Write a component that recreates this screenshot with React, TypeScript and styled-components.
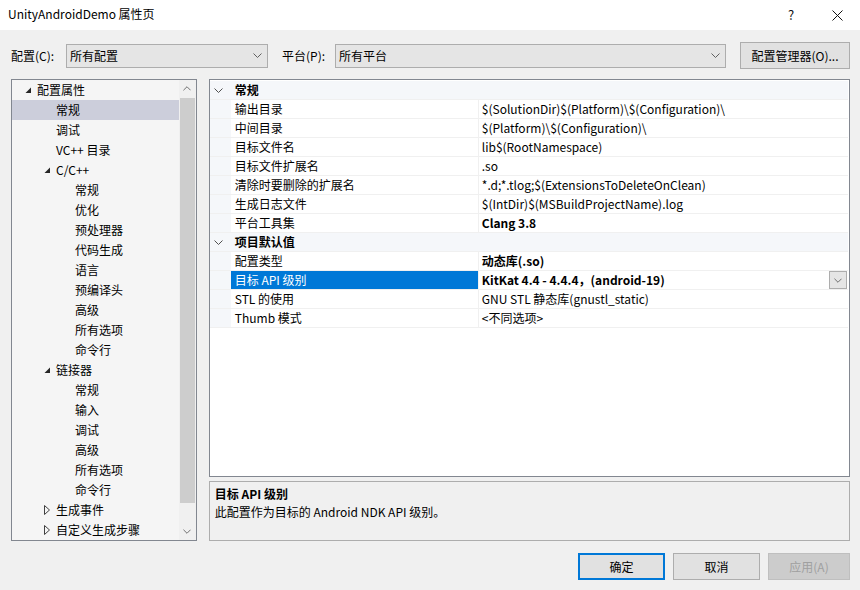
import React from "react";
import styled, { createGlobalStyle } from "styled-components";

const Global = createGlobalStyle`
  html, body { margin: 0; padding: 0; background: #f0f0f0; }
  body { font-family: "Noto Sans CJK SC", "Noto Sans", sans-serif; font-size: 12px; color: #000; }
  * { box-sizing: border-box; }
`;

const Window = styled.div`
  width: 860px;
  height: 590px;
  display: flex;
  flex-direction: column;
  background: #f0f0f0;
  overflow: hidden;
`;

const TitleBar = styled.div`
  height: 30px;
  background: #fff;
  display: flex;
  align-items: center;
  padding-left: 8px;
  font-size: 12px;
  line-height: 16px;
`;

const TitleText = styled.div`
  flex: 1;
  padding-bottom: 2px;
`;

const TitleButton = styled.div<{ $w: number }>`
  width: ${(p) => p.$w}px;
  height: 30px;
  display: flex;
  align-items: center;
  justify-content: center;
  font-size: 13px;
  color: #111;
`;

const Body = styled.div`
  flex: 1;
  display: flex;
  flex-direction: column;
  padding: 12px 10px 0 11px;
`;

const Toolbar = styled.div`
  height: 27px;
  display: flex;
  align-items: center;
`;

const Label = styled.div<{ $w: number; $gap?: number }>`
  width: ${(p) => p.$w}px;
  margin-left: ${(p) => p.$gap ?? 0}px;
  line-height: 16px;
`;

const Combo = styled.div<{ $w: number }>`
  width: ${(p) => p.$w}px;
  height: 24px;
  background: #e5e5e5;
  border: 1px solid #adadad;
  display: flex;
  align-items: center;
  padding-left: 3px;
  line-height: 16px;
`;

const ComboText = styled.div`
  flex: 1;
`;

const ComboArrow = styled.div`
  width: 20px;
  display: flex;
  justify-content: center;
  align-items: center;
`;

const ToolButton = styled.div`
  margin-left: 14px;
  width: 110px;
  height: 27px;
  background: #e1e1e1;
  border: 1px solid #adadad;
  display: flex;
  align-items: center;
  justify-content: center;
  line-height: 16px;
`;

const Main = styled.div`
  margin-top: 10px;
  height: 462px;
  display: flex;
  gap: 12px;
`;

const Tree = styled.div`
  width: 186px;
  height: 462px;
  border: 1px solid #828790;
  background: #f5f5f5;
  display: flex;
  overflow: hidden;
`;

const TreeList = styled.div`
  flex: 1;
  overflow: hidden;
`;

const TreeRow = styled.div<{ $level: number; $selected?: boolean }>`
  height: 20px;
  display: flex;
  align-items: center;
  padding-left: ${(p) => 13 + p.$level * 19}px;
  background: ${(p) => (p.$selected ? "#cccedb" : "transparent")};
  line-height: 16px;
  white-space: nowrap;
`;

const ArrowSlot = styled.div`
  width: 12px;
  height: 20px;
  display: flex;
  align-items: center;
`;

const ScrollBar = styled.div`
  width: 17px;
  background: #f0f0f0;
  display: flex;
  flex-direction: column;
`;

const ScrollBtn = styled.div`
  height: 17px;
  display: flex;
  align-items: center;
  justify-content: center;
`;

const ScrollTrack = styled.div`
  flex: 1;
  display: flex;
  flex-direction: column;
  padding: 1px 1px 0 1px;
`;

const Thumb = styled.div`
  height: 405px;
  background: #cdcdcd;
`;

const RightCol = styled.div`
  width: 642px;
  display: flex;
  flex-direction: column;
  gap: 4px;
`;

const Grid = styled.div`
  height: 398px;
  border: 1px solid #828790;
  background: #fff;
  padding: 1px 1px 0 0;
  overflow: hidden;
`;

const GridRow = styled.div<{ $category?: boolean }>`
  height: 19px;
  display: grid;
  grid-template-columns: 21px 247px 1fr;
  background: ${(p) => (p.$category ? "#f5f7fa" : "#fff")};
  border-bottom: 1px solid #f0f0f0;
  line-height: 16px;
`;

const Gutter = styled.div`
  background: #f5f7fa;
  display: flex;
  align-items: center;
  padding-left: 4px;
`;

const CatTitle = styled.div`
  grid-column: 2 / 4;
  font-weight: bold;
  padding-left: 4px;
  display: flex;
  align-items: center;
`;

const NameCell = styled.div<{ $selected?: boolean }>`
  padding-left: 4px;
  display: flex;
  align-items: center;
  white-space: nowrap;
  background: ${(p) => (p.$selected ? "#0078d7" : "transparent")};
  color: ${(p) => (p.$selected ? "#fff" : "#000")};
`;

const ValueCell = styled.div<{ $bold?: boolean }>`
  border-left: 1px solid #f0f0f0;
  padding-left: 3px;
  display: flex;
  align-items: center;
  white-space: nowrap;
  font-weight: ${(p) => (p.$bold ? "bold" : "normal")};
`;

const ValueText = styled.div`
  flex: 1;
`;

const DropBtn = styled.div`
  width: 18px;
  height: 18px;
  background: #e5e5e5;
  border: 1px solid #adadad;
  display: flex;
  align-items: center;
  justify-content: center;
  margin-right: 1px;
`;

const Desc = styled.div`
  height: 60px;
  border: 1px solid #adadad;
  background: #f0f0f0;
  padding: 3px 5px;
  line-height: 18px;
`;

const DescTitle = styled.div`
  font-weight: bold;
`;

const Footer = styled.div`
  margin-top: 12px;
  display: flex;
  justify-content: flex-end;
  gap: 8px;
`;

const Button = styled.div<{ $primary?: boolean; $disabled?: boolean; $w: number }>`
  width: ${(p) => p.$w}px;
  height: 27px;
  display: flex;
  align-items: center;
  justify-content: center;
  background: ${(p) => (p.$disabled ? "#cccccc" : "#e1e1e1")};
  border: ${(p) => (p.$primary ? "2px solid #0078d7" : p.$disabled ? "1px solid #bfbfbf" : "1px solid #adadad")};
  color: ${(p) => (p.$disabled ? "#a0a0a0" : "#000")};
  line-height: 16px;
`;

const Chevron = ({ dir = "down", color = "#606060", w = 9 }: { dir?: "down" | "up"; color?: string; w?: number }) => (
  <svg width={w} height={5} viewBox="0 0 9 5">
    <polyline
      points={dir === "down" ? "0.5,0.5 4.5,4.5 8.5,0.5" : "0.5,4.5 4.5,0.5 8.5,4.5"}
      fill="none"
      stroke={color}
      strokeWidth="1"
    />
  </svg>
);

const Expanded = () => (
  <svg width="7" height="7" viewBox="0 0 7 7">
    <polygon points="6,0.5 6,6 0.5,6" fill="#262626" />
  </svg>
);

const Collapsed = () => (
  <svg width="6" height="10" viewBox="0 0 6 10">
    <polygon points="0.5,0.5 5.5,5 0.5,9.5" fill="none" stroke="#404040" strokeWidth="1" />
  </svg>
);

type TreeItem = { label: string; level: number; state?: "open" | "closed"; selected?: boolean };

const treeItems: TreeItem[] = [
  { label: "配置属性", level: 0, state: "open" },
  { label: "常规", level: 1, selected: true },
  { label: "调试", level: 1 },
  { label: "VC++ 目录", level: 1 },
  { label: "C/C++", level: 1, state: "open" },
  { label: "常规", level: 2 },
  { label: "优化", level: 2 },
  { label: "预处理器", level: 2 },
  { label: "代码生成", level: 2 },
  { label: "语言", level: 2 },
  { label: "预编译头", level: 2 },
  { label: "高级", level: 2 },
  { label: "所有选项", level: 2 },
  { label: "命令行", level: 2 },
  { label: "链接器", level: 1, state: "open" },
  { label: "常规", level: 2 },
  { label: "输入", level: 2 },
  { label: "调试", level: 2 },
  { label: "高级", level: 2 },
  { label: "所有选项", level: 2 },
  { label: "命令行", level: 2 },
  { label: "生成事件", level: 1, state: "closed" },
  { label: "自定义生成步骤", level: 1, state: "closed" },
];

type Prop = { name: string; value: string; bold?: boolean; selected?: boolean };
type Category = { title: string; props: Prop[] };

const categories: Category[] = [
  {
    title: "常规",
    props: [
      { name: "输出目录", value: "$(SolutionDir)$(Platform)\\$(Configuration)\\" },
      { name: "中间目录", value: "$(Platform)\\$(Configuration)\\" },
      { name: "目标文件名", value: "lib$(RootNamespace)" },
      { name: "目标文件扩展名", value: ".so" },
      { name: "清除时要删除的扩展名", value: "*.d;*.tlog;$(ExtensionsToDeleteOnClean)" },
      { name: "生成日志文件", value: "$(IntDir)$(MSBuildProjectName).log" },
      { name: "平台工具集", value: "Clang 3.8", bold: true },
    ],
  },
  {
    title: "项目默认值",
    props: [
      { name: "配置类型", value: "动态库(.so)", bold: true },
      { name: "目标 API 级别", value: "KitKat 4.4 - 4.4.4，(android-19)", bold: true, selected: true },
      { name: "STL 的使用", value: "GNU STL 静态库(gnustl_static)" },
      { name: "Thumb 模式", value: "<不同选项>" },
    ],
  },
];

export default function App() {
  return (
    <Window>
      <Global />
      <TitleBar>
        <TitleText>UnityAndroidDemo 属性页</TitleText>
        <TitleButton $w={46}>?</TitleButton>
        <TitleButton $w={46}>
          <svg width="11" height="11" viewBox="0 0 11 11">
            <path d="M0.5 0.5 L10.5 10.5 M10.5 0.5 L0.5 10.5" stroke="#111" strokeWidth="1" />
          </svg>
        </TitleButton>
      </TitleBar>
      <Body>
        <Toolbar>
          <Label $w={55}>配置(C):</Label>
          <Combo $w={202}>
            <ComboText>所有配置</ComboText>
            <ComboArrow>
              <Chevron />
            </ComboArrow>
          </Combo>
          <Label $w={53} $gap={14}>平台(P):</Label>
          <Combo $w={391}>
            <ComboText>所有平台</ComboText>
            <ComboArrow>
              <Chevron />
            </ComboArrow>
          </Combo>
          <ToolButton>配置管理器(O)...</ToolButton>
        </Toolbar>
        <Main>
          <Tree>
            <TreeList>
              {treeItems.map((t, i) => (
                <TreeRow key={i} $level={t.level} $selected={t.selected}>
                  <ArrowSlot>
                    {t.state === "open" && <Expanded />}
                    {t.state === "closed" && <Collapsed />}
                  </ArrowSlot>
                  {t.label}
                </TreeRow>
              ))}
            </TreeList>
            <ScrollBar>
              <ScrollBtn>
                <Chevron dir="up" w={8} />
              </ScrollBtn>
              <ScrollTrack>
                <Thumb />
              </ScrollTrack>
              <ScrollBtn>
                <Chevron dir="down" w={8} />
              </ScrollBtn>
            </ScrollBar>
          </Tree>
          <RightCol>
            <Grid>
              {categories.map((c) => (
                <React.Fragment key={c.title}>
                  <GridRow $category>
                    <Gutter>
                      <Chevron color="#505050" />
                    </Gutter>
                    <CatTitle>{c.title}</CatTitle>
                  </GridRow>
                  {c.props.map((p) => (
                    <GridRow key={p.name}>
                      <Gutter />
                      <NameCell $selected={p.selected}>{p.name}</NameCell>
                      <ValueCell $bold={p.bold}>
                        <ValueText>{p.value}</ValueText>
                        {p.selected && (
                          <DropBtn>
                            <Chevron w={8} />
                          </DropBtn>
                        )}
                      </ValueCell>
                    </GridRow>
                  ))}
                </React.Fragment>
              ))}
            </Grid>
            <Desc>
              <DescTitle>目标 API 级别</DescTitle>
              <div>此配置作为目标的 Android NDK API 级别。</div>
            </Desc>
          </RightCol>
        </Main>
        <Footer>
          <Button $primary $w={87}>确定</Button>
          <Button $w={87}>取消</Button>
          <Button $disabled $w={82}>应用(A)</Button>
        </Footer>
      </Body>
    </Window>
  );
}
